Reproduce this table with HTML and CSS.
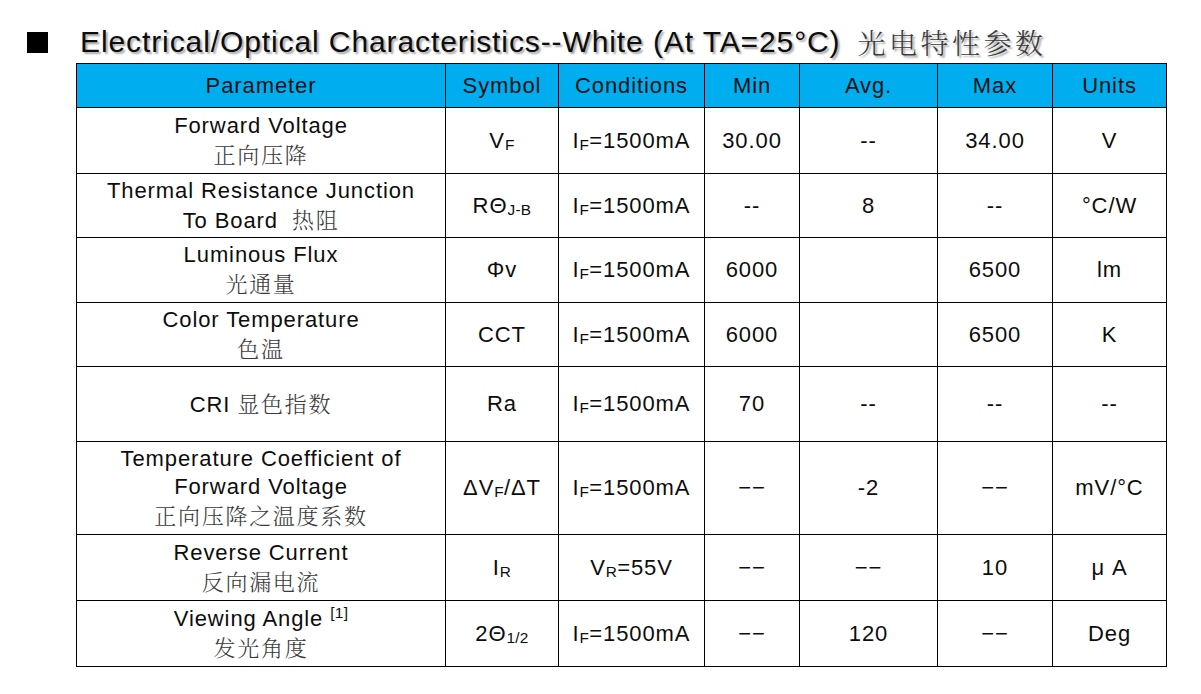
FILE: index.html
```html
<!DOCTYPE html>
<html lang="zh">
<head>
<meta charset="utf-8">
<title>Electrical/Optical Characteristics</title>
<link rel="stylesheet" href="styles.css">
</head>
<body>
<div class="page">
  <h1 class="title"><span class="bullet"></span><span class="title-en">Electrical/Optical Characteristics--White (At TA=25°C)</span><span class="cn title-cn">光电特性参数</span></h1>
  <table class="spec">
    <colgroup>
      <col class="c-param"><col class="c-sym"><col class="c-cond"><col class="c-min"><col class="c-avg"><col class="c-max"><col class="c-unit">
    </colgroup>
    <thead>
      <tr class="r-head"><th>Parameter</th><th>Symbol</th><th>Conditions</th><th>Min</th><th>Avg.</th><th>Max</th><th>Units</th></tr>
    </thead>
    <tbody>
      <tr class="r1">
        <td>Forward Voltage<br><span class="cn">正向压降</span></td>
        <td>V<sub>F</sub></td><td>I<sub>F</sub>=1500mA</td><td>30.00</td><td>--</td><td>34.00</td><td>V</td>
      </tr>
      <tr class="r2">
        <td>Thermal Resistance Junction<br>To Board&nbsp; <span class="cn">热阻</span></td>
        <td>RΘ<sub>J-B</sub></td><td>I<sub>F</sub>=1500mA</td><td>--</td><td>8</td><td>--</td><td>°C/W</td>
      </tr>
      <tr class="r3">
        <td>Luminous Flux<br><span class="cn">光通量</span></td>
        <td>Φv</td><td>I<sub>F</sub>=1500mA</td><td>6000</td><td></td><td>6500</td><td>lm</td>
      </tr>
      <tr class="r4">
        <td>Color Temperature<br><span class="cn">色温</span></td>
        <td>CCT</td><td>I<sub>F</sub>=1500mA</td><td>6000</td><td></td><td>6500</td><td>K</td>
      </tr>
      <tr class="r5">
        <td>CRI <span class="cn">显色指数</span></td>
        <td>Ra</td><td>I<sub>F</sub>=1500mA</td><td>70</td><td>--</td><td>--</td><td>--</td>
      </tr>
      <tr class="r6">
        <td>Temperature Coefficient of<br>Forward Voltage<br><span class="cn">正向压降之温度系数</span></td>
        <td>ΔV<sub>F</sub>/ΔT</td><td>I<sub>F</sub>=1500mA</td><td>−−</td><td>-2</td><td>−−</td><td>mV/°C</td>
      </tr>
      <tr class="r7">
        <td>Reverse Current<br><span class="cn">反向漏电流</span></td>
        <td>I<sub>R</sub></td><td>V<sub>R</sub>=55V</td><td>−−</td><td>−−</td><td>10</td><td>μ A</td>
      </tr>
      <tr class="r8">
        <td>Viewing Angle <sup>[1]</sup><br><span class="cn">发光角度</span></td>
        <td>2Θ<sub>1/2</sub></td><td>I<sub>F</sub>=1500mA</td><td>−−</td><td>120</td><td>−−</td><td>Deg</td>
      </tr>
    </tbody>
  </table>
</div>
</body>
</html>
```
FILE: styles.css
```css
html, body {
  margin: 0;
  padding: 0;
  background: #ffffff;
}

body {
  font-family: "Liberation Sans", Arial, sans-serif;
  color: #0d0d0d;
}

.page {
  padding: 27px 0 0 27px;
}

.title {
  display: flex;
  align-items: center;
  margin: 0;
  height: 30px;
  font-size: 30px;
  font-weight: normal;
  letter-spacing: 0.9px;
  text-shadow: 2px 2px 2px rgba(0, 0, 0, 0.35);
  color: #0d0d0d;
  white-space: nowrap;
}

.bullet {
  width: 21px;
  height: 21px;
  background: #000000;
  margin-right: 32px;
  flex: none;
}

.title-cn {
  margin-left: 17px;
  font-size: 28px;
  letter-spacing: 3.5px;
  color: #333333;
}

.cn {
  font-family: "Noto Serif CJK SC", "Noto Sans CJK SC", serif;
  color: #3a3a3a;
  font-weight: 300;
}

.spec {
  margin: 6px 0 0 49px;
  border-collapse: collapse;
  table-layout: fixed;
  width: 1090px;
  font-size: 22px;
  line-height: 28px;
  letter-spacing: 0.9px;
}

.spec .cn {
  font-size: 22px;
  letter-spacing: 1.7px;
}

.c-param { width: 369px; }
.c-sym { width: 113px; }
.c-cond { width: 146px; }
.c-min { width: 95px; }
.c-avg { width: 138px; }
.c-max { width: 115px; }
.c-unit { width: 114px; }

.spec th,
.spec td {
  border: 1px solid #000000;
  padding: 0;
  text-align: center;
  vertical-align: middle;
  white-space: nowrap;
}

.spec th {
  background: #00aeef;
  font-weight: normal;
  color: #111111;
}

.spec sub {
  font-size: 0.7em;
  letter-spacing: 0.3px;
  vertical-align: -0.1em;
  line-height: 0;
}

.spec sup {
  font-size: 0.7em;
  letter-spacing: 0.3px;
  vertical-align: 0.55em;
  line-height: 0;
}

.r-head { height: 44px; }
.r1 { height: 66px; }
.r2 { height: 64px; }
.r3 { height: 65px; }
.r4 { height: 64px; }
.r5 { height: 75px; }
.r6 { height: 93px; }
.r7 { height: 66px; }
.r8 { height: 66px; }
```
